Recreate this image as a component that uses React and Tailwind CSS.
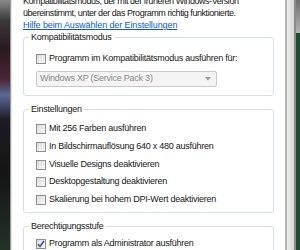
const font = "font-['Liberation_Sans',Arial,sans-serif]";

function Checkbox({ checked }) {
  return (
    <span className="flex h-[10px] w-[10px] shrink-0 items-center justify-center border border-[#8f8f8f] bg-gradient-to-br from-[#dcdcdc] to-[#f7f7f7]">
      {checked && (
        <svg width="8" height="8" viewBox="0 0 8 8">
          <path d="M1 4.2 L3 6.4 L7 1" fill="none" stroke="#3c5a9a" strokeWidth="1.6" />
        </svg>
      )}
    </span>
  );
}

function Option({ label, checked, className = "" }) {
  return (
    <div className={`flex h-[12px] items-center gap-[3px] pl-[12px] ${className}`}>
      <Checkbox checked={checked} />
      <span className="whitespace-nowrap">{label}</span>
    </div>
  );
}

function Group({ title, className = "", children }) {
  return (
    <fieldset className={`mr-[11px] rounded-[3px] border border-[#d5dfe5] ${className}`}>
      <legend className="ml-[5px] px-[2px] leading-[12px]">{title}</legend>
      {children}
    </fieldset>
  );
}

export default function App() {
  return (
    <div className={`flex h-[250px] w-[300px] overflow-hidden bg-white text-[9px] tracking-[-0.25px] text-[#161616] ${font}`}>
      <div className="w-[10px] shrink-0 bg-[linear-gradient(to_bottom,#8a8a8a_0%,#3a3a3a_8%,#2a1820_20%,#4a2638_32%,#5a6a9a_38%,#1d1a22_48%,#151515_70%,#233227_100%)]" />
      <div className="w-[1px] shrink-0 bg-[#9a9a9a]" />
      <div className="w-[1px] shrink-0 bg-[#e4e4e4]" />

      <div className="min-w-0 flex-1 pl-[11px]">
        <p className="-mt-[5px] whitespace-nowrap leading-[12px] tracking-[-0.45px]">
          Kompatibilitätsmodus, der mit der früheren Windows-Version
          <br />
          übereinstimmt, unter der das Programm richtig funktionierte.
        </p>
        <a className="block leading-[12px] tracking-[-0.1px] text-[#0a5cc4] underline">Hilfe beim Auswählen der Einstellungen</a>

        <Group title="Kompatibilitätsmodus" className="pb-[8px]">
          <Option label="Programm im Kompatibilitätsmodus ausführen für:" className="mt-[10px]" />
          <div className="ml-[12px] mt-[6px] flex h-[16px] w-[181px] items-center justify-between rounded-[2px] border border-[#c9c9c9] bg-[#f4f4f4] pl-[3px] pr-[5px] text-[#8a8a8a]">
            <span>Windows XP (Service Pack 3)</span>
            <svg width="6" height="4" viewBox="0 0 6 4">
              <path d="M0 0 H6 L3 3.5 Z" fill="#9a9a9a" />
            </svg>
          </div>
        </Group>

        <Group title="Einstellungen" className="mt-[7px] pb-[6px]">
          <Option label="Mit 256 Farben ausführen" className="mt-[8px]" />
          <Option label="In Bildschirmauflösung 640 x 480 ausführen" className="mt-[6px]" />
          <Option label="Visuelle Designs deaktivieren" className="mt-[6px]" />
          <Option label="Desktopgestaltung deaktivieren" className="mt-[5px]" />
          <Option label="Skalierung bei hohem DPI-Wert deaktivieren" className="mt-[6px]" />
        </Group>

        <Group title="Berechtigungsstufe" className="mt-[7px] pb-[6px]">
          <Option label="Programm als Administrator ausführen" checked className="mt-[6px]" />
        </Group>
      </div>

      <div className="w-[2px] shrink-0 bg-[#b4b4b4]" />
      <div className="w-[7px] shrink-0 bg-gradient-to-r from-[#eeeeee] to-[#d6d6d6]" />
      <div className="w-[2px] shrink-0 bg-[#8c8c8c]" />
      <div className="flex w-[4px] shrink-0 flex-col">
        <div className="h-[33px] bg-gradient-to-b from-[#6e6e6e] to-[#b5b5b5]" />
        <div className="flex-1 bg-[#1f4a30]" />
      </div>
    </div>
  );
}
